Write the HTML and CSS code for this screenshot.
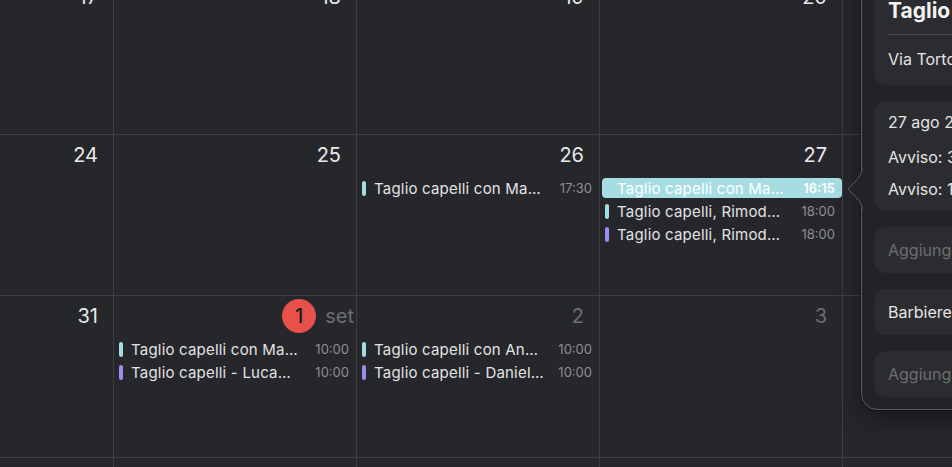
FILE: index.html
```html
<!DOCTYPE html>
<html lang="it">
<head>
    <meta charset="UTF-8">
    <meta name="viewport" content="width=device-width, initial-scale=1.0">
    <title>Calendario</title>
    <link rel="stylesheet" href="styles.css">
</head>
<body>
    <div class="calendar">
        <!-- settimana 17-23 -->
        <div class="day"><div class="day-head"><span class="num">17</span></div></div>
        <div class="day"><div class="day-head"><span class="num">18</span></div></div>
        <div class="day"><div class="day-head"><span class="num">19</span></div></div>
        <div class="day"><div class="day-head"><span class="num">20</span></div></div>
        <div class="day"><div class="day-head"><span class="num">21</span></div></div>

        <!-- settimana 24-30 -->
        <div class="day"><div class="day-head"><span class="num">24</span></div></div>
        <div class="day"><div class="day-head"><span class="num">25</span></div></div>
        <div class="day">
            <div class="day-head"><span class="num">26</span></div>
            <div class="event teal"><span class="title">Taglio capelli con Ma…</span><span class="time">17:30</span></div>
        </div>
        <div class="day">
            <div class="day-head"><span class="num">27</span></div>
            <div class="event teal selected"><span class="title">Taglio capelli con Ma…</span><span class="time">16:15</span></div>
            <div class="event teal"><span class="title">Taglio capelli, Rimod…</span><span class="time">18:00</span></div>
            <div class="event purple"><span class="title">Taglio capelli, Rimod…</span><span class="time">18:00</span></div>
        </div>
        <div class="day"><div class="day-head"><span class="num">28</span></div></div>

        <!-- settimana 31 ago - 6 set -->
        <div class="day"><div class="day-head"><span class="num">31</span></div></div>
        <div class="day">
            <div class="day-head month-start"><span class="badge">1</span><span class="num dim">set</span></div>
            <div class="event teal"><span class="title">Taglio capelli con Ma…</span><span class="time">10:00</span></div>
            <div class="event purple"><span class="title">Taglio capelli - Luca…</span><span class="time">10:00</span></div>
        </div>
        <div class="day">
            <div class="day-head"><span class="num dim">2</span></div>
            <div class="event teal"><span class="title">Taglio capelli con An…</span><span class="time">10:00</span></div>
            <div class="event purple"><span class="title">Taglio capelli - Daniel…</span><span class="time">10:00</span></div>
        </div>
        <div class="day"><div class="day-head"><span class="num dim">3</span></div></div>
        <div class="day"><div class="day-head"><span class="num dim">4</span></div></div>

        <div class="day"></div>
        <div class="day"></div>
        <div class="day"></div>
        <div class="day"></div>
        <div class="day"></div>
    </div>

    <svg class="popover-arrow" width="16" height="42" viewBox="0 0 16 42">
        <path class="arrow-fill" d="M16 0 L15 0 C15 6 12 10 8 14 L2.2 19.6 Q0.8 21 2.2 22.4 L8 28 C12 32 15 36 15 42 L16 42 Z"/>
        <path class="arrow-line" d="M15 0 C15 6 12 10 8 14 L2.2 19.6 Q0.8 21 2.2 22.4 L8 28 C12 32 15 36 15 42"/>
    </svg>
    <div class="popover">
        <div class="card first">
            <div class="event-title">Taglio capelli con Marco</div>
            <div class="separator"></div>
            <div class="line">Via Tortona, 12, Milano</div>
        </div>
        <div class="card">
            <div class="line">27 ago 2025 dalle 16:15 alle 17:00</div>
            <div class="line reminder">Avviso: 30 minuti prima</div>
            <div class="line reminder">Avviso: 1 giorno prima</div>
        </div>
        <div class="card short">
            <div class="line placeholder">Aggiungi invitati</div>
        </div>
        <div class="card short">
            <div class="line">Barbiere</div>
        </div>
        <div class="card short">
            <div class="line placeholder">Aggiungi note, URL o allegati</div>
        </div>
    </div>
</body>
</html>
```

FILE: styles.css
```css
body {
    margin: 0;
    height: 467px;
    overflow: hidden;
    position: relative;
    background-color: #25272b;
    color: #e6e6e7;
    font-family: Inter, "Noto Sans", sans-serif;
}
.calendar {
    display: grid;
    grid-template-columns: 114px 243px 243px 243px 243px;
    grid-template-rows: 158px 161px 162px 161px;
    margin-top: -23px;
}
.day {
    box-sizing: border-box;
    border-right: 1px solid #3c3e42;
    border-bottom: 1px solid #3c3e42;
    overflow: hidden;
}
.day-head {
    display: flex;
    justify-content: flex-end;
    align-items: center;
    gap: 9px;
    height: 24px;
    padding: 8px 15px 0 0;
    margin-bottom: 11px;
}
.day-head.month-start {
    padding-right: 2px;
}
.num {
    font-size: 20px;
    line-height: 24px;
    color: #e9e9ea;
}
.num.dim {
    color: #6c6e72;
}
.badge {
    flex-shrink: 0;
    width: 34px;
    height: 34px;
    border-radius: 50%;
    background-color: #e8504b;
    color: #1d1d1f;
    font-size: 20px;
    font-weight: 500;
    line-height: 34px;
    text-align: center;
}
.event {
    display: flex;
    align-items: center;
    height: 20px;
    margin: 0 0 3px 2px;
    padding: 0 7px 0 3px;
    border-radius: 4px;
    font-size: 15px;
    letter-spacing: 0.2px;
    color: #e3e3e4;
}
.event::before {
    content: "";
    flex-shrink: 0;
    width: 4px;
    height: 15px;
    margin-right: 8px;
    border-radius: 2px;
    background-color: var(--tint);
}
.event.teal {
    --tint: #a3dce2;
}
.event.purple {
    --tint: #9b8ef2;
}
.event.selected {
    background-color: #a6dde3;
    color: #ffffff;
}
.title {
    flex: 1;
    min-width: 0;
    white-space: nowrap;
    overflow: hidden;
    text-overflow: ellipsis;
}
.time {
    margin-left: 10px;
    font-size: 13px;
    letter-spacing: 0;
    color: #8d8e92;
}
.selected .time {
    color: #ffffff;
    font-weight: 600;
}
.popover {
    position: absolute;
    left: 861px;
    top: -30px;
    width: 200px;
    box-sizing: border-box;
    padding: 13px 12px 12px;
    display: flex;
    flex-direction: column;
    gap: 16px;
    background-color: #222326;
    border: 1px solid #5c5e62;
    border-radius: 16px;
    box-shadow: 0 0 0 1px rgba(0, 0, 0, 0.35), 0 8px 24px rgba(0, 0, 0, 0.4);
}
.popover-arrow {
    position: absolute;
    left: 847px;
    top: 168px;
    z-index: 2;
}
.arrow-fill {
    fill: #222326;
}
.arrow-line {
    fill: none;
    stroke: #5c5e62;
    stroke-width: 1;
}
.card {
    background-color: #2b2c2f;
    border-radius: 12px;
    padding: 11px 0 12px 14px;
    white-space: nowrap;
    overflow: hidden;
}
.card.first {
    padding: 14px 0 16px 14px;
}
.card.short {
    padding: 13px 0 13px 14px;
}
.event-title {
    font-size: 21px;
    font-weight: 700;
    line-height: 26px;
    color: #f2f2f3;
}
.separator {
    height: 1px;
    margin: 10px 0 14px;
    background-color: #47494d;
}
.line {
    font-size: 16px;
    line-height: 20px;
    color: #e4e4e5;
}
.line.reminder {
    margin-top: 15px;
}
.line.reminder + .line.reminder {
    margin-top: 12px;
}
.line.placeholder {
    color: #6d6e72;
}
```
